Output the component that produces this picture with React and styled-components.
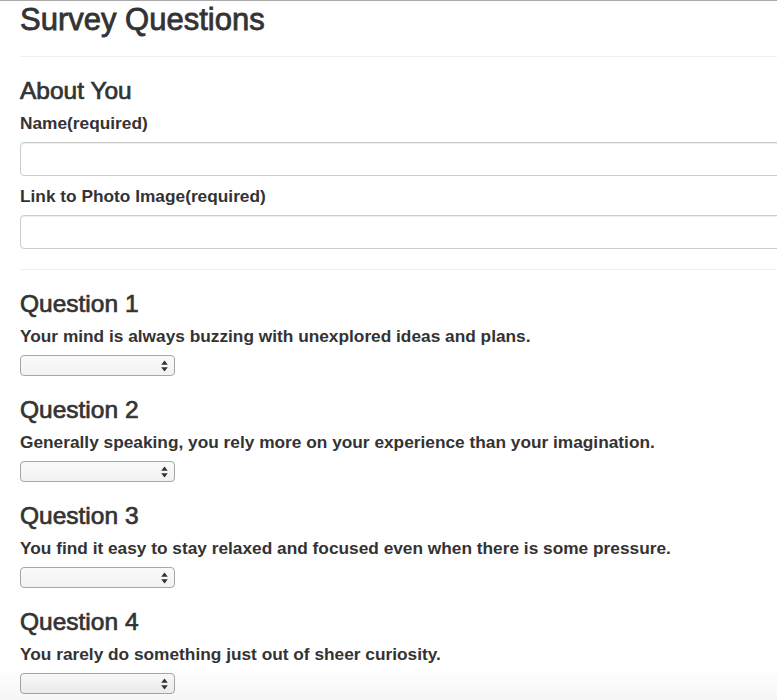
import styled, { createGlobalStyle } from "styled-components";

const questions = [
  "Your mind is always buzzing with unexplored ideas and plans.",
  "Generally speaking, you rely more on your experience than your imagination.",
  "You find it easy to stay relaxed and focused even when there is some pressure.",
  "You rarely do something just out of sheer curiosity.",
];

export default function App() {
  return (
    <>
      <GlobalStyle />
      <Page>
        <Title>Survey Questions</Title>
        <Rule />
        <SectionTitle>About You</SectionTitle>
        <Field>
          <Label htmlFor="name">Name(required)</Label>
          <TextInput id="name" type="text" />
        </Field>
        <Field>
          <Label htmlFor="photo">Link to Photo Image(required)</Label>
          <TextInput id="photo" type="text" />
        </Field>
        <Rule />
        {questions.map((text, i) => (
          <Question key={i}>
            <SectionTitle>Question {i + 1}</SectionTitle>
            <QuestionText>{text}</QuestionText>
            <SelectWrap>
              <Select defaultValue="">
                <option value=""></option>
                <option value="1">1 (Strongly Disagree)</option>
                <option value="2">2</option>
                <option value="3">3</option>
                <option value="4">4</option>
                <option value="5">5 (Strongly Agree)</option>
              </Select>
              <Arrows width="7" height="12" viewBox="0 0 7 12">
                <path d="M3.5 0.5 L6.8 4.8 H0.2 Z" fill="#333" />
                <path d="M3.5 11.5 L6.8 7.2 H0.2 Z" fill="#333" />
              </Arrows>
            </SelectWrap>
          </Question>
        ))}
      </Page>
      <BottomFade />
    </>
  );
}

const GlobalStyle = createGlobalStyle`
  html, body {
    margin: 0;
    padding: 0;
    background: #fff;
    overflow-x: hidden;
  }
  body {
    border-top: 1px solid #a9a9a9;
    font-family: "Liberation Sans", Arial, sans-serif;
    color: #333;
  }
`;

const Page = styled.div`
  width: 820px;
  padding: 0 0 0 20px;
`;

const Title = styled.h2`
  font-size: 31px;
  font-weight: 400;
  line-height: 33px;
  margin: 2px 0 0;
  -webkit-text-stroke: 0.8px #333;
`;

const Rule = styled.hr`
  border: 0;
  border-top: 1px solid #eee;
  margin: 20px 0 0;
`;

const SectionTitle = styled.h3`
  font-size: 24.5px;
  font-weight: 400;
  line-height: 28px;
  margin: 20px 0 6px;
  -webkit-text-stroke: 0.7px #333;
`;

const Field = styled.div`
  display: flex;
  flex-direction: column;
  margin-bottom: 8px;
`;

const Label = styled.label`
  font-size: 17.3px;
  font-weight: 700;
  line-height: 24px;
  margin-bottom: 7px;
`;

const TextInput = styled.input`
  box-sizing: border-box;
  height: 34px;
  width: 100%;
  border: 1px solid #ccc;
  border-radius: 4px;
  box-shadow: inset 0 1px 1px rgba(0, 0, 0, 0.075);
  background: #fff;
  padding: 6px 12px;
  font: inherit;
`;

const Question = styled.div`
  display: flex;
  flex-direction: column;
  align-items: flex-start;
`;

const QuestionText = styled.p`
  font-size: 17.3px;
  font-weight: 700;
  line-height: 24px;
  margin: 0 0 7px;
`;

const SelectWrap = styled.div`
  position: relative;
  width: 155px;
  height: 21px;
`;

const Select = styled.select`
  appearance: none;
  box-sizing: border-box;
  width: 155px;
  height: 21px;
  border: 1px solid #a6a6a6;
  border-radius: 4px;
  background: linear-gradient(#fafafa, #f2f2f2);
  font-family: "Liberation Sans", Arial, sans-serif;
  font-size: 13px;
  padding: 0 18px 0 6px;
  color: #333;
`;

const Arrows = styled.svg`
  position: absolute;
  right: 7px;
  top: 4.5px;
  pointer-events: none;
`;

const BottomFade = styled.div`
  position: fixed;
  left: 0;
  right: 0;
  bottom: 0;
  height: 34px;
  pointer-events: none;
  background: linear-gradient(rgba(0, 0, 0, 0), rgba(0, 0, 0, 0.035));
`;
